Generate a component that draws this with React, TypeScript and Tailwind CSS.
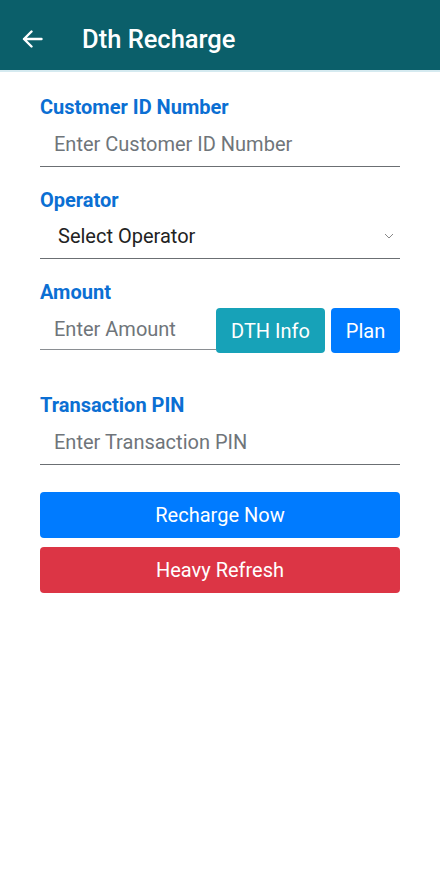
import { useState } from "react";

const labelCls = "block text-[20px] leading-[22px] font-bold text-[#0b6fd3]";
const inputCls =
  "w-full h-[49px] border-b border-[#6b6f73] bg-white pl-[14px] pt-[3px] text-[20px] text-[#222] placeholder:text-[#6f757a] outline-none";

export default function App() {
  const [customerId, setCustomerId] = useState("");
  const [amount, setAmount] = useState("");
  const [pin, setPin] = useState("");

  return (
    <div className="min-h-screen bg-white font-['Roboto',sans-serif]">
      <header className="h-[70px] bg-[#0b5f6a] flex items-center pt-[8px]">
        <button className="ml-[22px] w-[21px] h-[21px] flex items-center justify-center text-white">
          <svg width="21" height="18" viewBox="0 0 21 18" fill="none" stroke="white" strokeWidth="2.4" strokeLinecap="round" strokeLinejoin="round">
            <path d="M19.5 9H2M9.5 1.5L2 9l7.5 7.5" />
          </svg>
        </button>
        <h1 className="ml-[39px] text-[25.5px] font-medium text-white">Dth Recharge</h1>
      </header>
      <div className="h-[2px] bg-[#d5eaf0]" />

      <div className="px-10 pt-[24px]">
        <label className={labelCls}>Customer ID Number</label>
        <input
          className={inputCls}
          placeholder="Enter Customer ID Number"
          value={customerId}
          onChange={(e) => setCustomerId(e.target.value)}
        />

        <label className={labelCls + " mt-[22px]"}>Operator</label>
        <div className="relative h-[48px] border-b border-[#6b6f73] flex items-center pl-[18px] pt-[2px]">
          <span className="text-[20px] text-[#222]">Select Operator</span>
          <svg className="absolute right-[6px] top-[22px]" width="10" height="6" viewBox="0 0 10 6" fill="none" stroke="#888" strokeWidth="1">
            <path d="M1 1l4 4 4-4" />
          </svg>
        </div>

        <label className={labelCls + " mt-[22px]"}>Amount</label>
        <div className="flex items-start mt-[5px]">
          <input
            className="w-[176px] h-[42px] border-b border-[#8a8e92] bg-white pl-[14px] text-[20px] text-[#222] placeholder:text-[#6f757a] outline-none"
            placeholder="Enter Amount"
            value={amount}
            onChange={(e) => setAmount(e.target.value)}
          />
          <button className="w-[109px] h-[45px] rounded-[4px] bg-[#17a2b8] text-white text-[20px]">DTH Info</button>
          <button className="ml-[6px] w-[69px] h-[45px] rounded-[4px] bg-[#007bff] text-white text-[20px]">Plan</button>
        </div>

        <label className={labelCls + " mt-[41px]"}>Transaction PIN</label>
        <input
          className={inputCls}
          placeholder="Enter Transaction PIN"
          value={pin}
          onChange={(e) => setPin(e.target.value)}
        />

        <button className="mt-[27px] w-full h-[46px] rounded-[4px] bg-[#007bff] text-white text-[20px]">
          Recharge Now
        </button>
        <button className="mt-[9px] w-full h-[46px] rounded-[4px] bg-[#dc3545] text-white text-[20px]">
          Heavy Refresh
        </button>
      </div>
    </div>
  );
}
